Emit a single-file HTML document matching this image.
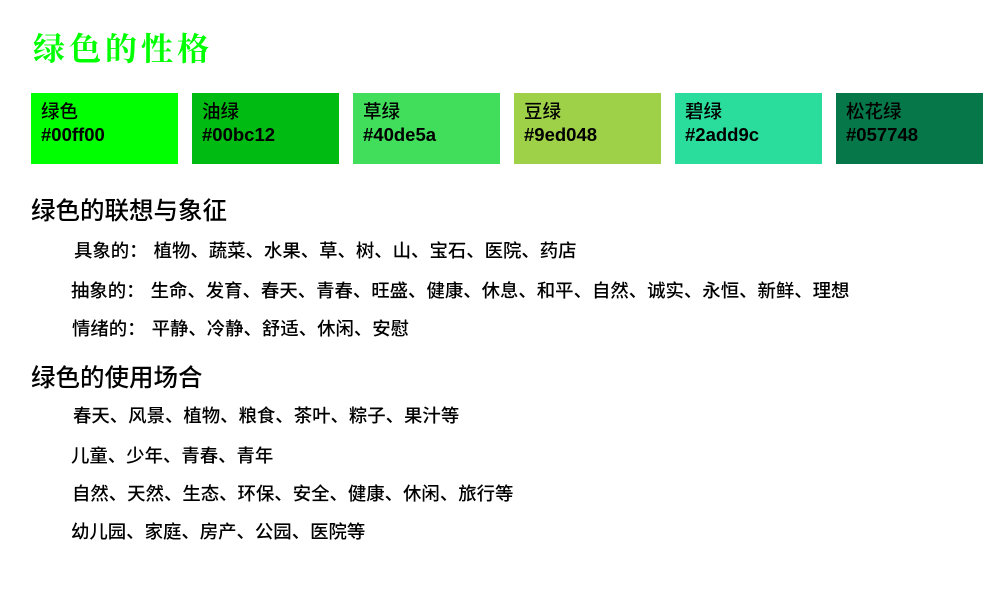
<!DOCTYPE html>
<html><head><meta charset="utf-8"><style>
body{margin:0;width:1000px;height:600px;background:#fff;position:relative;overflow:hidden;font-family:"Liberation Sans","Noto Sans CJK SC",sans-serif;color:#000}
.a{position:absolute;white-space:nowrap}
.t{left:33px;top:24px;font-size:32px;color:#00ff00;font-weight:bold;letter-spacing:4px;font-family:"Noto Serif CJK SC","Liberation Serif",serif}
.b{position:absolute;top:93px;width:147px;height:71px}
.b div{position:absolute;left:10px;font-size:18.5px;line-height:22px;font-weight:bold;font-family:"Liberation Sans","Noto Sans CJK SC",sans-serif}
.b div:first-child{font-weight:500}
.h{left:31px;font-size:24.5px;font-weight:500}
.l{font-size:18.4px;line-height:22px;font-weight:500}
.l span{margin-left:6px}
</style></head><body>
<div class="a t">绿色的性格</div>
<div class="b" style="left:31px;background:#00ff00"><div style="top:8px">绿色</div><div style="top:31px">#00ff00</div></div>
<div class="b" style="left:192px;background:#00bc12"><div style="top:8px">油绿</div><div style="top:31px">#00bc12</div></div>
<div class="b" style="left:353px;background:#40de5a"><div style="top:8px">草绿</div><div style="top:31px">#40de5a</div></div>
<div class="b" style="left:514px;background:#9ed048"><div style="top:8px">豆绿</div><div style="top:31px">#9ed048</div></div>
<div class="b" style="left:675px;background:#2add9c"><div style="top:8px">碧绿</div><div style="top:31px">#2add9c</div></div>
<div class="b" style="left:836px;background:#057748"><div style="top:8px">松花绿</div><div style="top:31px">#057748</div></div>
<div class="a h" style="top:192px">绿色的联想与象征</div>
<div class="a l" style="left:74px;top:240px">具象的：<span>植物、蔬菜、水果、草、树、山、宝石、医院、药店</span></div>
<div class="a l" style="left:71px;top:280px">抽象的：<span>生命、发育、春天、青春、旺盛、健康、休息、和平、自然、诚实、永恒、新鲜、理想</span></div>
<div class="a l" style="left:72px;top:318px">情绪的：<span>平静、冷静、舒适、休闲、安慰</span></div>
<div class="a h" style="top:359px">绿色的使用场合</div>
<div class="a l" style="left:73px;top:405px">春天、风景、植物、粮食、茶叶、粽子、果汁等</div>
<div class="a l" style="left:71px;top:445px">儿童、少年、青春、青年</div>
<div class="a l" style="left:72px;top:483px">自然、天然、生态、环保、安全、健康、休闲、旅行等</div>
<div class="a l" style="left:71px;top:521px">幼儿园、家庭、房产、公园、医院等</div>
</body></html>
